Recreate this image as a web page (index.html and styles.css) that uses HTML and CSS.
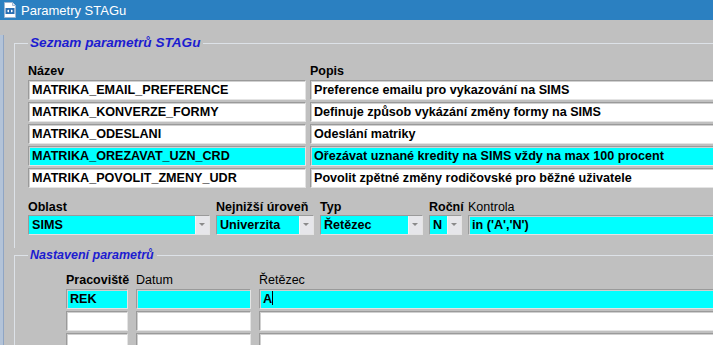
FILE: index.html
```html
<!DOCTYPE html>
<html lang="cs">
<head>
    <meta charset="UTF-8">
    <title>Parametry STAGu</title>
    <link rel="stylesheet" href="styles.css">
</head>
<body>
    <div class="titlebar">
        <svg class="app-icon" width="14" height="16" viewBox="0 0 14 16">
            <path d="M1.5 0.5 H9.5 L12.5 3.5 V15.5 H1.5 Z" fill="#ffffff" stroke="#9fb6d2"/>
            <path d="M9.5 0.5 V3.5 H12.5" fill="#dfe8f2" stroke="#9fb6d2"/>
            <rect x="2.5" y="6" width="9" height="6" fill="#2b6fb4"/>
            <path d="M6 7.5 L3.8 9 L6 10.5 Z" fill="#ffffff"/>
            <path d="M8 7.5 L10.2 9 L8 10.5 Z" fill="#ffffff"/>
        </svg>
        <span class="title">Parametry STAGu</span>
    </div>

    <div class="window">
        <fieldset class="group group-list">
            <legend>Seznam parametrů STAGu</legend>
            <div class="param-grid">
                <div class="lbl">Název</div>
                <div class="lbl">Popis</div>

                <div class="field">MATRIKA_EMAIL_PREFERENCE</div>
                <div class="field">Preference emailu pro vykazování na SIMS</div>

                <div class="field">MATRIKA_KONVERZE_FORMY</div>
                <div class="field">Definuje způsob vykázání změny formy na SIMS</div>

                <div class="field">MATRIKA_ODESLANI</div>
                <div class="field">Odeslání matriky</div>

                <div class="field current">MATRIKA_OREZAVAT_UZN_CRD</div>
                <div class="field current">Ořezávat uznané kredity na SIMS vždy na max 100 procent</div>

                <div class="field">MATRIKA_POVOLIT_ZMENY_UDR</div>
                <div class="field">Povolit zpětné změny rodičovské pro běžné uživatele</div>
            </div>

            <div class="detail-grid">
                <div class="lbl">Oblast</div>
                <div class="lbl">Nejnižší úroveň</div>
                <div class="lbl">Typ</div>
                <div class="lbl">Roční</div>
                <div class="lbl plain">Kontrola</div>

                <div class="field select"><span class="val">SIMS</span><span class="drop"></span></div>
                <div class="field select"><span class="val">Univerzita</span><span class="drop"></span></div>
                <div class="field select"><span class="val">Řetězec</span><span class="drop"></span></div>
                <div class="field select"><span class="val">N</span><span class="drop"></span></div>
                <div class="field current">in ('A','N')</div>
            </div>
        </fieldset>

        <fieldset class="group group-settings">
            <legend>Nastavení parametrů</legend>
            <div class="settings-grid">
                <div class="lbl">Pracoviště</div>
                <div class="lbl plain">Datum</div>
                <div class="lbl plain">Řetězec</div>

                <div class="field current">REK</div>
                <div class="field current"></div>
                <div class="field current">A<span class="caret"></span></div>

                <div class="field"></div>
                <div class="field"></div>
                <div class="field"></div>

                <div class="field"></div>
                <div class="field"></div>
                <div class="field"></div>
            </div>
        </fieldset>
    </div>
</body>
</html>
```

FILE: styles.css
```css
body {
    margin: 0;
    width: 713px;
    height: 345px;
    overflow: hidden;
    background-color: #c0c0c0;
    font-family: "Liberation Sans", Arial, sans-serif;
    color: #000000;
}
.titlebar {
    height: 20px;
    background-color: #2b80c1;
    display: flex;
    align-items: center;
    padding-left: 3px;
    gap: 4px;
}
.app-icon {
    display: block;
}
.title {
    color: #ffffff;
    font-size: 13px;
}
.window {
    width: 800px;
    height: 325px;
    border-left: 3px solid #b3c3d8;
    box-shadow: inset 1px 0 0 #8fa5c4;
    padding-left: 11px;
}
.group {
    margin: 0;
    min-width: 0;
    border: 0;
    border-top: 1px solid #dde2e8;
    border-left: 1px solid #dde2e8;
    padding: 13px 0 0 13px;
}
.group legend {
    padding: 0 3px 0 2px;
    color: #1c1cd0;
    font-weight: bold;
    font-style: italic;
}
.group-list {
    margin-top: 15px;
    padding-bottom: 13px;
}
.group-list legend {
    font-size: 13.6px;
    line-height: 16px;
}
.group-settings {
    padding-top: 10px;
}
.group-settings legend {
    font-size: 12.5px;
    line-height: 15px;
}
.lbl {
    font-size: 12.5px;
    font-weight: bold;
    line-height: 14px;
    white-space: nowrap;
}
.lbl.plain {
    font-weight: normal;
}
.field {
    box-sizing: border-box;
    height: 20px;
    background-color: #ffffff;
    border: 1px solid;
    border-color: #9a9a9a #e4e4e4 #e4e4e4 #9a9a9a;
    box-shadow: inset 1px 1px 0 #d0d0d0;
    padding: 0 3px;
    font-size: 12.6px;
    font-weight: bold;
    line-height: 18px;
    white-space: nowrap;
    overflow: hidden;
}
.field.current {
    background-color: #00ffff;
}
.param-grid {
    display: grid;
    grid-template-columns: 278px 440px;
    column-gap: 4px;
    row-gap: 2px;
}
.detail-grid {
    margin-top: 12px;
    display: grid;
    grid-template-columns: 182px 98px 103px 33px 300px;
    column-gap: 6px;
    row-gap: 1px;
}
.select {
    display: flex;
    padding: 0;
}
.select .val {
    flex: 1;
    background-color: #00ffff;
    padding-left: 3px;
}
.select .drop {
    width: 13px;
    background-color: #e6e6ea;
    border-left: 1px solid #f4f4f4;
    position: relative;
}
.select .drop::after {
    content: "";
    position: absolute;
    left: 3px;
    top: 7px;
    border-left: 3px solid transparent;
    border-right: 3px solid transparent;
    border-top: 3px solid #8a8a8a;
}
.settings-grid {
    margin-left: 38px;
    display: grid;
    grid-template-columns: 62px 115px 480px;
    column-gap: 8px;
    row-gap: 2px;
}
.caret {
    display: inline-block;
    width: 1px;
    height: 14px;
    background-color: #000000;
    vertical-align: -2px;
}
```
